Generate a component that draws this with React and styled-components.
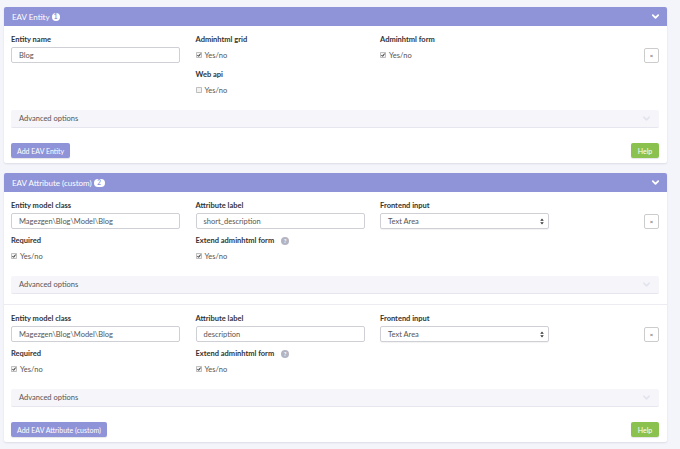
import React from 'react';
import styled, { createGlobalStyle } from 'styled-components';

const GlobalStyle = createGlobalStyle`
	html, body {
		margin: 0;
		padding: 0;
		background: #f4f5fb;
	}
	body {
		font-family: 'Lato', 'Open Sans', sans-serif;
		color: #333;
	}
`;

const Chevron = ({ color = '#fff', size = 9 }) => (
	<svg width={size} height={size} viewBox='0 0 10 10'>
		<polyline points='2,3.5 5,6.5 8,3.5' fill='none' stroke={color} strokeWidth='2' strokeLinecap='round' strokeLinejoin='round' />
	</svg>
);

const CheckBox = ({ checked }) => (
	<svg width='6' height='6' viewBox='0 0 12 12'>
		<rect x='0.75' y='0.75' width='10.5' height='10.5' rx='1.5' fill='#f2f2f2' stroke='#8a8a8a' strokeWidth='1.2' />
		{checked && <polyline points='3,6.2 5.2,8.6 9.2,3.2' fill='none' stroke='#222' strokeWidth='2' />}
	</svg>
);

const SelectArrows = () => (
	<svg width='4' height='7' viewBox='0 0 8 14'>
		<polygon points='4,1 7.5,5.5 0.5,5.5' fill='#333' />
		<polygon points='4,13 7.5,8.5 0.5,8.5' fill='#333' />
	</svg>
);

const Field = ({ label, help, children, col }) => (
	<FieldBox col={col}>
		<Label>
			{label}
			{help && <HelpDot>?</HelpDot>}
		</Label>
		{children}
	</FieldBox>
);

const CheckField = ({ label, help, checked = true, col }) => (
	<Field label={label} help={help} col={col}>
		<CheckRow>
			<CheckBox checked={checked} />
			Yes/no
		</CheckRow>
	</Field>
);

const Advanced = () => (
	<AdvancedBar>
		Advanced options
		<Chevron color='#e4e4ee' size={9} />
	</AdvancedBar>
);

const Panel = ({ title, badge, pill, children, addLabel }) => (
	<PanelBox>
		<Header>
			<Title>
				{title}
				<Badge pill={pill}>{badge}</Badge>
			</Title>
			<Chevron />
		</Header>
		{children}
		<Footer>
			<AddButton>{addLabel}</AddButton>
			<HelpButton>Help</HelpButton>
		</Footer>
	</PanelBox>
);

const Attribute = ({ label }) => (
	<Item>
		<FieldGrid>
			<Field label='Entity model class' col={1}>
				<Input>Magezgen\Blog\Model\Blog</Input>
			</Field>
			<Field label='Attribute label' col={2}>
				<Input>{label}</Input>
			</Field>
			<Field label='Frontend input' col={3}>
				<Input select>
					Text Area
					<SelectArrows />
				</Input>
			</Field>
			<CloseButton>×</CloseButton>
			<CheckField label='Required' col={1} />
			<CheckField label='Extend adminhtml form' help col={2} />
		</FieldGrid>
		<Advanced />
	</Item>
);

const App = () => {
	return (
		<Page>
			<GlobalStyle />
			<Panel title='EAV Entity' badge='1' addLabel='Add EAV Entity'>
				<Item>
					<FieldGrid>
						<Field label='Entity name' col={1}>
							<Input>Blog</Input>
						</Field>
						<CheckField label='Adminhtml grid' col={2} />
						<CheckField label='Adminhtml form' col={3} />
						<CloseButton>×</CloseButton>
						<CheckField label='Web api' checked={false} col={2} />
					</FieldGrid>
					<Advanced />
				</Item>
			</Panel>
			<Panel title='EAV Attribute (custom)' badge='2' pill addLabel='Add EAV Attribute (custom)'>
				<Attribute label='short_description' />
				<Attribute label='description' />
			</Panel>
		</Page>
	);
};

export default App;

const Page = styled.div`
	padding: 7px 13px 7px 4px;
	display: flex;
	flex-direction: column;
	gap: 10px;
`;

const PanelBox = styled.section`
	background: #fff;
	border-radius: 2px;
	box-shadow: 0 1px 2px rgba(40, 40, 80, 0.12);
	overflow: hidden;
`;

const Header = styled.div`
	height: 19px;
	background: #8f94d9;
	display: flex;
	align-items: center;
	justify-content: space-between;
	padding: 0 7px 0 8px;
`;

const Title = styled.div`
	display: flex;
	align-items: center;
	gap: 2px;
	color: #fff;
	font-size: 8px;
`;

const Badge = styled.span`
	display: inline-flex;
	align-items: center;
	justify-content: center;
	height: 8px;
	min-width: ${(p) => (p.pill ? '11px' : '8px')};
	border-radius: 4px;
	background: #fff;
	color: #8f94d9;
	font-size: 6.5px;
	font-weight: 700;
	line-height: 8px;
`;

const Item = styled.div`
	padding: 9px 8px 10px 7px;
	& + & {
		border-top: 1px solid #ececf2;
	}
`;

const FieldGrid = styled.div`
	display: grid;
	grid-template-columns: 169px 169px 169px 1fr auto;
	column-gap: 15.5px;
	row-gap: 7px;
`;

const FieldBox = styled.div`
	grid-column: ${(p) => p.col};
	display: flex;
	flex-direction: column;
	gap: 2px;
`;

const Label = styled.div`
	display: flex;
	align-items: center;
	gap: 7px;
	height: 10px;
	line-height: 10px;
	font-size: 7.5px;
	font-weight: 700;
	color: #333;
`;

const HelpDot = styled.span`
	display: inline-flex;
	align-items: center;
	justify-content: center;
	width: 8px;
	height: 8px;
	border-radius: 50%;
	background: #b3b4c2;
	color: #fff;
	font-size: 6px;
	font-weight: 700;
`;

const Input = styled.div`
	box-sizing: border-box;
	height: 16px;
	border: 1px solid #cfcfd6;
	border-radius: 2px;
	display: flex;
	align-items: center;
	justify-content: space-between;
	padding: ${(p) => (p.select ? '0 4px 0 7px' : '0 7px')};
	font-size: 7.5px;
	color: #555;
	background: #fff;
	box-shadow: ${(p) => (p.select ? '0 1px 1px rgba(0,0,0,0.05)' : 'none')};
`;

const CheckRow = styled.div`
	height: 16px;
	display: flex;
	align-items: center;
	gap: 3px;
	font-size: 7.5px;
	color: #555;
`;

const CloseButton = styled.button`
	grid-column: 5;
	grid-row: 1;
	align-self: end;
	box-sizing: border-box;
	width: 15px;
	height: 15px;
	padding: 0;
	border: 1px solid #ccc;
	border-radius: 2px;
	background: #fff;
	color: #444;
	font-size: 6px;
	line-height: 1;
	font-family: 'Lato', sans-serif;
`;

const AdvancedBar = styled.div`
	margin-top: 12px;
	height: 18px;
	box-sizing: border-box;
	background: #f6f6fa;
	border-bottom: 1px solid #e6e6ee;
	border-radius: 2px;
	padding: 0 8px;
	display: flex;
	align-items: center;
	justify-content: space-between;
	font-size: 7.5px;
	color: #555;
`;

const Footer = styled.div`
	padding: 5px 8px 5px 7px;
	display: flex;
	justify-content: space-between;
	align-items: center;
`;

const BaseButton = styled.button`
	height: 15px;
	border: none;
	border-radius: 2px;
	padding: 0 6px;
	color: #fff;
	font-size: 7px;
	font-family: 'Lato', sans-serif;
	box-shadow: 0 1px 1px rgba(0, 0, 0, 0.1);
`;

const AddButton = styled(BaseButton)`
	background: #8f94d9;
	padding: 0 6px;
`;

const HelpButton = styled(BaseButton)`
	background: #8bc24f;
	width: 28px;
	padding: 0;
`;
